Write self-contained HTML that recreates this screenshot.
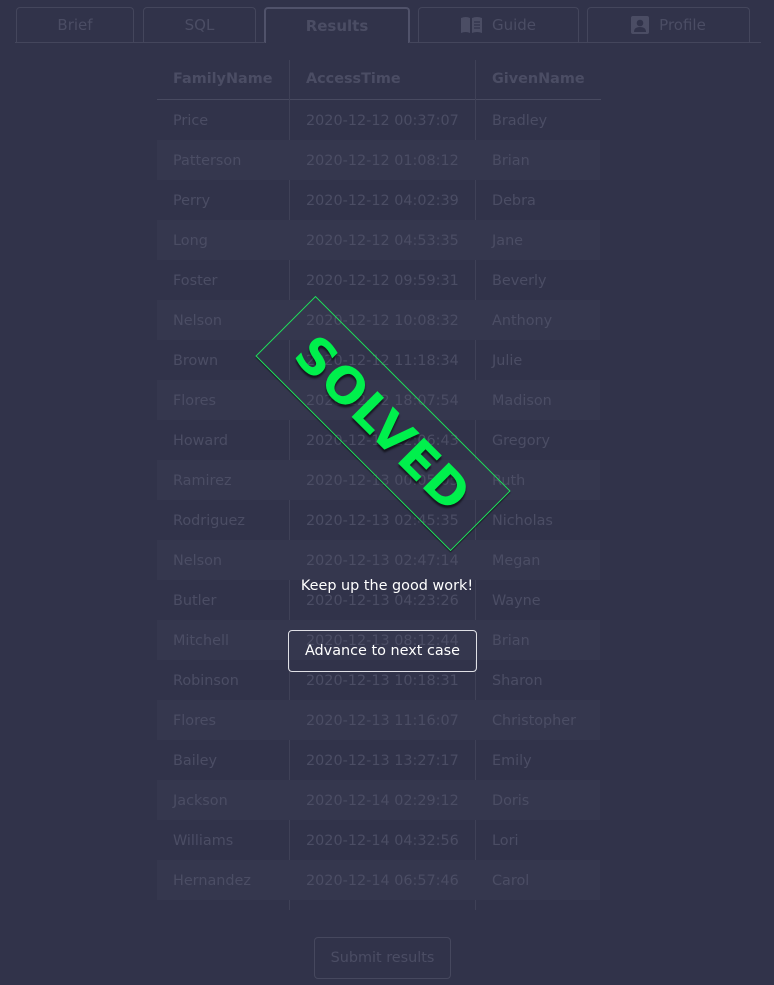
<!DOCTYPE html>
<html><head><meta charset="utf-8"><style>
*{box-sizing:border-box;margin:0;padding:0}
body{width:774px;height:985px;background:#31334a;font-family:"DejaVu Sans","Liberation Sans",sans-serif;font-size:14.4px;color:#4b4d64;position:relative;overflow:hidden}
.tab{position:absolute;top:7px;height:35px;border:1px solid #44465c;border-bottom:none;border-radius:4px 4px 0 0;display:flex;align-items:center;justify-content:center;color:#4b4d64;font-size:15px}
.tab svg{margin-right:10px}
.line{position:absolute;top:42px;height:1px;background:#44465c}
.cell{position:absolute;height:40px;line-height:42px;white-space:nowrap}
.stripe{position:absolute;left:157px;width:443px;height:40px;background:#35374e}
.vl{position:absolute;top:60px;width:1px;height:850px;background:#3f4157}
</style></head><body>
<div class="tab" style="left:16px;width:118px">Brief</div>
<div class="tab" style="left:143px;width:113px">SQL</div>
<div class="tab" style="left:264px;width:146px;height:36px;border-color:#50526a;font-weight:bold;border-width:2px 2px 0 2px">Results</div>
<div class="tab" style="left:418px;width:161px"><svg width="21" height="18" viewBox="0 0 21 18"><path d="M0 2Q5 0 9 2V17Q5 15 0 17Z M11 2Q16 0 21 2V17Q16 15 11 17Z" fill="#4b4d64"/><path d="M13 6h6M13 9h6M13 12h6" stroke="#31334a" stroke-width="1.3"/></svg>Guide</div>
<div class="tab" style="left:587px;width:163px"><svg width="18" height="18" viewBox="0 0 18 18"><rect width="18" height="18" rx="2" fill="#4b4d64"/><circle cx="9" cy="7" r="3.3" fill="#31334a"/><path d="M3 16Q3 11 9 11Q15 11 15 16Z" fill="#31334a"/></svg>Profile</div>
<div class="line" style="left:15px;width:250px"></div>
<div class="line" style="left:409px;width:352px"></div>

<div style="position:absolute;left:157px;top:99px;width:444px;height:1px;background:#484a60"></div>
<div class="vl" style="left:289px"></div>
<div class="vl" style="left:475px"></div>
<div id="rows"></div>
<script>
var d=[["Price","2020-12-12 00:37:07","Bradley"],["Patterson","2020-12-12 01:08:12","Brian"],["Perry","2020-12-12 04:02:39","Debra"],["Long","2020-12-12 04:53:35","Jane"],["Foster","2020-12-12 09:59:31","Beverly"],["Nelson","2020-12-12 10:08:32","Anthony"],["Brown","2020-12-12 11:18:34","Julie"],["Flores","2020-12-12 18:07:54","Madison"],["Howard","2020-12-12 22:06:43","Gregory"],["Ramirez","2020-12-13 00:05:05","Ruth"],["Rodriguez","2020-12-13 02:45:35","Nicholas"],["Nelson","2020-12-13 02:47:14","Megan"],["Butler","2020-12-13 04:23:26","Wayne"],["Mitchell","2020-12-13 08:12:44","Brian"],["Robinson","2020-12-13 10:18:31","Sharon"],["Flores","2020-12-13 11:16:07","Christopher"],["Bailey","2020-12-13 13:27:17","Emily"],["Jackson","2020-12-14 02:29:12","Doris"],["Williams","2020-12-14 04:32:56","Lori"],["Hernandez","2020-12-14 06:57:46","Carol"]];
var h='<div class="cell" style="left:173px;top:58px;font-weight:bold">FamilyName</div><div class="cell" style="left:306px;top:58px;font-weight:bold">AccessTime</div><div class="cell" style="left:492px;top:58px;font-weight:bold">GivenName</div>';
d.forEach(function(r,i){var t=100+i*40;if(i%2)h+='<div class="stripe" style="top:'+t+'px"></div>';h+='<div class="cell" style="left:173px;top:'+t+'px">'+r[0]+'</div><div class="cell" style="left:306px;top:'+t+'px">'+r[1]+'</div><div class="cell" style="left:492px;top:'+t+'px">'+r[2]+'</div>';});
document.getElementById('rows').innerHTML=h;
</script>

<div style="position:absolute;left:245px;top:381px;width:276px;height:85px;border:1px solid #1ee05a;transform:rotate(45deg);display:flex;align-items:center;justify-content:center;box-shadow:1px 1px 1px rgba(0,0,0,.5)">
<span style="font-size:50px;font-weight:bold;color:#00f04c;letter-spacing:1px;text-shadow:2px 2px 2px rgba(0,0,0,.6)">SOLVED</span></div>
<div style="position:absolute;left:0;width:774px;top:578px;text-align:center;color:#fff">Keep up the good work!</div>
<div style="position:absolute;left:288px;top:630px;width:189px;height:42px;border:1px solid #e0e0e6;border-radius:4px;color:#fff;display:flex;align-items:center;justify-content:center">Advance to next case</div>
<div style="position:absolute;left:314px;top:937px;width:137px;height:42px;border:1px solid #46485e;border-radius:4px;display:flex;align-items:center;justify-content:center">Submit results</div>
</body></html>
